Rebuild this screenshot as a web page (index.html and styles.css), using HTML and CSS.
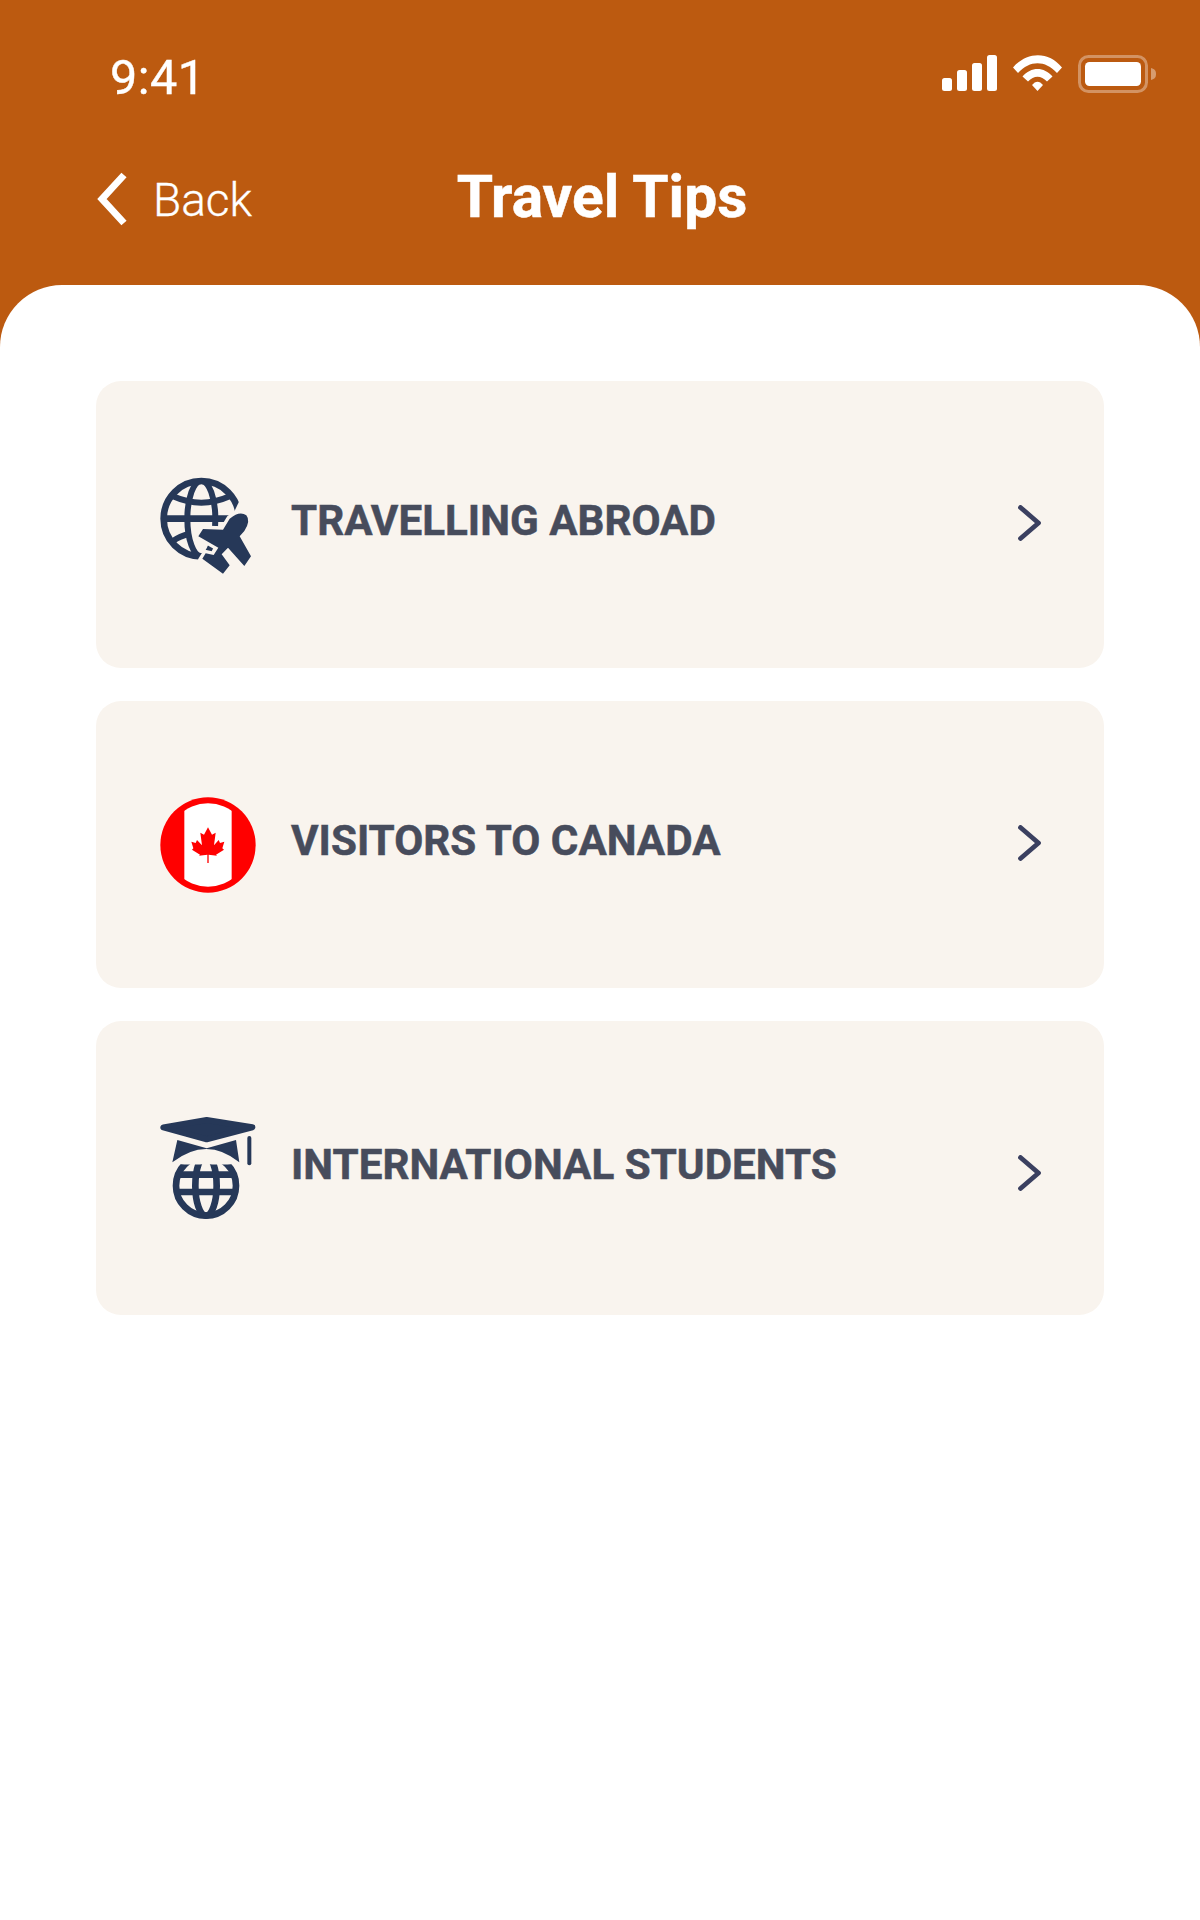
FILE: index.html
```html
<!DOCTYPE html>
<html lang="en">
<head>
<meta charset="utf-8">
<title>Travel Tips</title>
<link rel="stylesheet" href="styles.css">
</head>
<body>
<div class="screen">
  <header class="top">
    <div class="status">
      <span class="time">9:41</span>
      <div class="status-icons">
        <svg class="signal" width="56" height="36" viewBox="0 0 56 36"><rect x="0" y="23" width="10" height="13" rx="2.5"/><rect x="15" y="15" width="10" height="21" rx="2.5"/><rect x="30" y="8" width="10" height="28" rx="2.5"/><rect x="45" y="0" width="10" height="36" rx="2.5"/></svg>
        <svg class="wifi" width="50" height="36" viewBox="0 0 50 36"><path d="M0 12.5 C14 -4 36 -4 49 12.5 L44 18 C32 5 17 5 5 18 Z"/><path d="M9.5 21.5 C18 11.5 31 11.5 39.5 21.5 L34 26.5 C28 20 21 20 15 26.5 Z"/><path d="M19 30 C22.5 25.5 26.5 25.5 30 30 L24.5 36 Z"/></svg>
        <svg class="battery" width="80" height="38" viewBox="0 0 80 38"><rect x="1.5" y="1.500" width="67" height="35" rx="9" fill="none" stroke="#fff" stroke-opacity=".35" stroke-width="3"/><rect x="7" y="7" width="56" height="24" rx="4.500" fill="#fff"/><path d="M73 13 C77 14 78 16 78 19 C78 22 77 24 73 25 Z" fill="#fff" fill-opacity=".4"/></svg>
      </div>
    </div>
    <nav class="nav">
      <a class="back">
        <svg width="34" height="54" viewBox="0 0 34 54"><path d="M28 3 L6 27 L28 51" fill="none" stroke="#fff" stroke-width="7"/></svg>
        <span class="back-label">Back</span>
      </a>
      <h1 class="title">Travel Tips</h1>
    </nav>
  </header>
  <main class="sheet">
    <a class="card">
      <svg class="icon icon-globe" width="100" height="104" viewBox="55 62 300 312">
        <defs><mask id="planeCut" maskUnits="userSpaceOnUse" x="0" y="0" width="420" height="420">
          <rect width="420" height="420" fill="#fff"/>
          <path d="M270 205 Q300 180 320 195 Q334 212 314 242 L300 258 L334 318 L314 347 L265 292 L246 312 L270 345 L250 370 L188 325 L198 309 L222 314 L236 292 L176 258 L190 236 L250 238 Z" fill="#000" stroke="#000" stroke-width="20"/>
          <path d="M300 150 L420 150 L420 420 L170 420 Z" fill="#000"/>
        </mask></defs>
        <g mask="url(#planeCut)" fill="none" stroke="#263858" stroke-width="20">
          <circle cx="185" cy="205" r="113"/>
          <ellipse cx="185" cy="205" rx="42" ry="113" stroke-width="18"/>
          <path d="M72 205 H298"/>
          <path d="M100 138 Q185 176 270 138" stroke-width="18"/>
          <path d="M100 272 Q120 258 150 250" stroke-width="18"/>
        </g>
        <path d="M270 205 Q300 180 320 195 Q334 212 314 242 L300 258 L334 318 L314 347 L265 292 L246 312 L270 345 L250 370 L188 325 L198 309 L222 314 L236 292 L176 258 L190 236 L250 238 Z" fill="#263858"/>
      </svg>
      <span class="label">TRAVELLING ABROAD</span>
      <svg class="chev" width="24" height="36" viewBox="0 0 24 36"><path d="M2.500 2.500 L20.500 18 L2.500 33.500" fill="none" stroke="#3b4060" stroke-width="4.800" stroke-linecap="round" stroke-linejoin="round"/></svg>
    </a>
    <a class="card">
      <svg class="icon icon-flag" width="100" height="104" viewBox="54 40 300 312">
        <circle cx="204" cy="193" r="143" fill="#f00"/>
        <clipPath id="band"><rect x="133" y="40" width="142" height="300"/></clipPath>
        <circle cx="204" cy="193" r="125" fill="#fff" clip-path="url(#band)"/>
        <path fill="#f00" d="M204 140 L216 162 L227 156 L222 194 L236 178 L240 187 L253 183 L247 203 L252 207 L228 222 L231 225 L206 222 L206 247 L202 247 L202 222 L177 225 L180 222 L156 207 L160 203 L154 183 L167 187 L171 178 L186 194 L181 156 L192 162 Z"/>
      </svg>
      <span class="label">VISITORS TO CANADA</span>
      <svg class="chev" width="24" height="36" viewBox="0 0 24 36"><path d="M2.500 2.500 L20.500 18 L2.500 33.500" fill="none" stroke="#3b4060" stroke-width="4.800" stroke-linecap="round" stroke-linejoin="round"/></svg>
    </a>
    <a class="card card-tall">
      <svg class="icon" width="100" height="108" viewBox="54 40 300 324">
        <clipPath id="globeClip"><path d="M60 180 Q125 196 198 190 Q270 196 340 180 V380 H60 Z"/></clipPath>
        <path d="M70 80 L200 58 L337 80 L200 116 Z" fill="#263858" stroke="#263858" stroke-width="18" stroke-linejoin="round"/>
        <path d="M112 118 L200 143 L288 118 L298 185 Q200 105 97 185 Z" fill="#263858"/>
        <path d="M328 112 V188" stroke="#263858" stroke-width="12" stroke-linecap="round"/>
        <g clip-path="url(#globeClip)" fill="none" stroke="#263858" stroke-width="20">
          <circle cx="198" cy="255" r="90"/>
          <ellipse cx="198" cy="255" rx="32" ry="90"/>
          <path d="M110 222 H288"/>
          <path d="M108 274 H288"/>
        </g>
      </svg>
      <span class="label">INTERNATIONAL STUDENTS</span>
      <svg class="chev chev-low" width="24" height="36" viewBox="0 0 24 36"><path d="M2.500 2.500 L20.500 18 L2.500 33.500" fill="none" stroke="#3b4060" stroke-width="4.800" stroke-linecap="round" stroke-linejoin="round"/></svg>
    </a>
  </main>
</div>
</body>
</html>
```
FILE: styles.css
```css
* { box-sizing: border-box; }
html, body { margin: 0; padding: 0; background: #fff; }
body { font-family: Roboto, "Liberation Sans", sans-serif; }
.screen { width: 1200px; height: 1920px; background: #bc5a10; display: flex; flex-direction: column; overflow: hidden; }
.top { height: 285px; flex: none; color: #fff; padding: 0 42px 0 110px; }
.status { display: flex; justify-content: space-between; align-items: flex-start; padding-top: 55px; height: 159px; }
.time { font-size: 48.500px; line-height: 44px; letter-spacing: 0.5px; margin-top: 1px; -webkit-text-stroke: 0.4px #fff; }
.status-icons { display: flex; align-items: flex-start; gap: 15px; }
.nav { display: flex; align-items: center; height: 80px; margin-left: -14px; position: relative; }
.back { display: flex; align-items: center; gap: 23px; }
.back-label { font-size: 46px; font-weight: 300; margin-top: 2px; -webkit-text-stroke: 0.3px #fff; }
.title { position: absolute; left: 6px; top: 0; width: 1000px; margin: 0; line-height: 76px; text-align: center; font-size: 58.7px; font-weight: 700; -webkit-text-stroke: 0.5px #fff; }
.signal, .wifi { fill: #fff; }
.sheet { flex: 1; background: #fff; border-radius: 62px 62px 0 0; padding: 96px 96px 0; display: flex; flex-direction: column; gap: 33px; }
.card { height: 287px; background: #f9f4ee; border-radius: 25px; display: flex; align-items: center; padding: 0 62px 0 62px; }
.card-tall { height: 294px; }
.icon { flex: none; margin-right: 33px; }
.icon-globe { margin-bottom: 4px; }
.icon-flag { margin-top: 2px; }
.label { flex: 1; font-size: 42.2px; font-weight: 700; color: #474c5c; margin-bottom: 8px; -webkit-text-stroke: 0.5px #474c5c; }
.chev { flex: none; margin-bottom: 3px; }
.chev-low { margin: 9px 0 0; }
```
